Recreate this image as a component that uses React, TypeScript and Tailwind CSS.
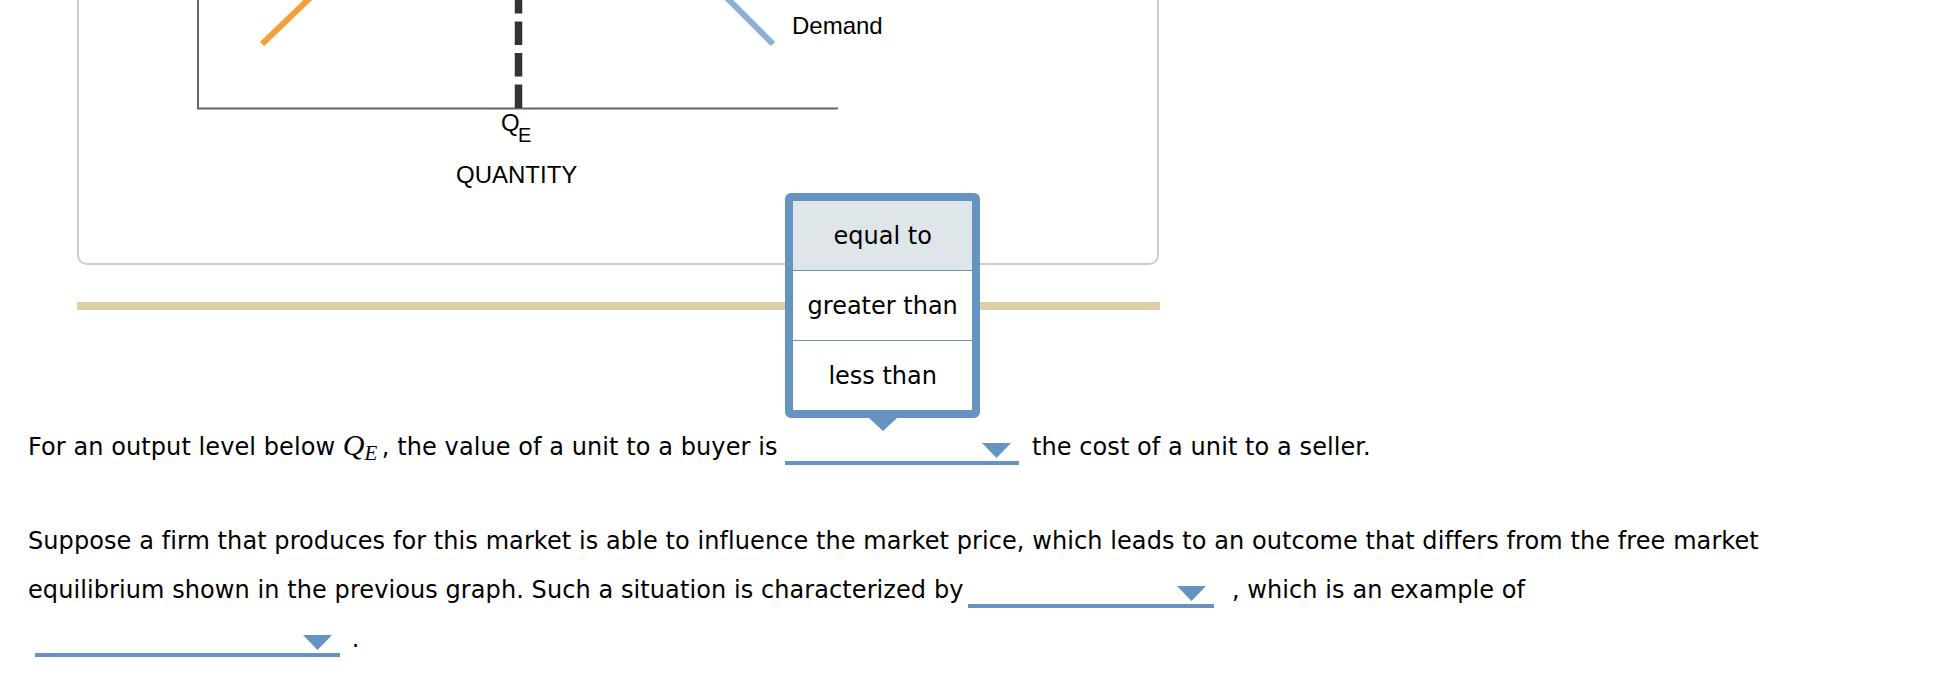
import React from "react";

function Arrow() {
  return (
    <svg
      className="absolute right-[8px] top-[4px]"
      width="29"
      height="15"
      viewBox="0 0 29 15"
    >
      <polygon points="0,0 29,0 14.5,15" fill="#6594c3" />
    </svg>
  );
}

function Dropdown({ className, children }: { className: string; children?: React.ReactNode }) {
  return (
    <span
      className={
        "relative inline-block h-[26px] border-b-4 border-[#6594c3] align-[-10px] " + className
      }
    >
      <Arrow />
      {children}
    </span>
  );
}

function QE() {
  return (
    <span className="inline-block w-[39px] leading-none font-['Liberation_Serif',serif] italic text-[30px] tracking-normal">
      Q<span className="relative top-[5px] text-[21px]">E</span>
    </span>
  );
}

function Popup() {
  return (
    <div className="absolute left-0 bottom-[calc(100%+21px)] w-[195px] tracking-normal">
      <div className="rounded-[6px] border-[8px] border-[#6594c3] bg-white leading-normal">
        <div className="h-[69px] bg-[#dfe6e9] flex items-center justify-center">equal to</div>
        <div className="h-px bg-[#6594c3]" />
        <div className="h-[69px] flex items-center justify-center">greater than</div>
        <div className="h-px bg-[#6594c3]" />
        <div className="h-[69px] flex items-center justify-center">less than</div>
      </div>
      <svg className="absolute left-[84px] top-full block" width="28" height="13" viewBox="0 0 28 13">
        <polygon points="0,0 28,0 14,13" fill="#6594c3" />
      </svg>
    </div>
  );
}

export default function App() {
  return (
    <div className="w-[1938px] h-[686px] overflow-hidden bg-white text-black font-['DejaVu_Sans',Verdana,sans-serif] text-[24px]">
      <div className="ml-[77px] w-[1082px] h-[265px] border-2 border-t-0 border-[#cccccc] rounded-b-[10px]">
        <svg className="block" width="1078" height="263" viewBox="79 0 1078 263">
          <line x1="198" y1="0" x2="198" y2="109" stroke="#646464" strokeWidth="2" />
          <line x1="197" y1="108.5" x2="838" y2="108.5" stroke="#646464" strokeWidth="2" />
          <line x1="262" y1="44" x2="312" y2="-4" stroke="#f4a13b" strokeWidth="6" />
          <line x1="773" y1="44" x2="725" y2="-4" stroke="#8cb0d5" strokeWidth="6" />
          <line
            x1="518.5"
            y1="108"
            x2="518.5"
            y2="0"
            stroke="#333333"
            strokeWidth="7.5"
            strokeDasharray="23.5 8"
          />
          <g fontFamily="'Liberation Sans', Arial, sans-serif" fill="#000">
            <text x="792" y="34" fontSize="24">Demand</text>
            <text x="501" y="131" fontSize="24">Q</text>
            <text x="518" y="142" fontSize="20">E</text>
            <text x="456" y="183" fontSize="24">QUANTITY</text>
          </g>
        </svg>
      </div>
      <div className="ml-[77px] mt-[37px] w-[1083px] h-[8px] bg-[#dbd0a8]" />
      <p className="ml-[28px] mt-[113px] leading-[49px] whitespace-nowrap tracking-[0.08px]">
        For an output level below <QE />, the value of a unit to a buyer is{" "}
        <Dropdown className="w-[234px] mr-[5px]">
          <Popup />
        </Dropdown>{" "}
        the cost of a unit to a seller.
      </p>
      <p className="ml-[28px] mt-[45px] w-[1790px] leading-[49px] tracking-[0.08px]">
        Suppose a firm that produces for this market is able to influence the market price, which leads to
        an outcome that differs from the free market equilibrium shown in the previous graph. Such a
        situation is characterized by <Dropdown className="w-[246px] ml-[-3px] mr-[10px]" /> , which is an example of{" "}
        <Dropdown className="w-[305px] ml-[7px] mr-[4px]" /> .
      </p>
    </div>
  );
}
